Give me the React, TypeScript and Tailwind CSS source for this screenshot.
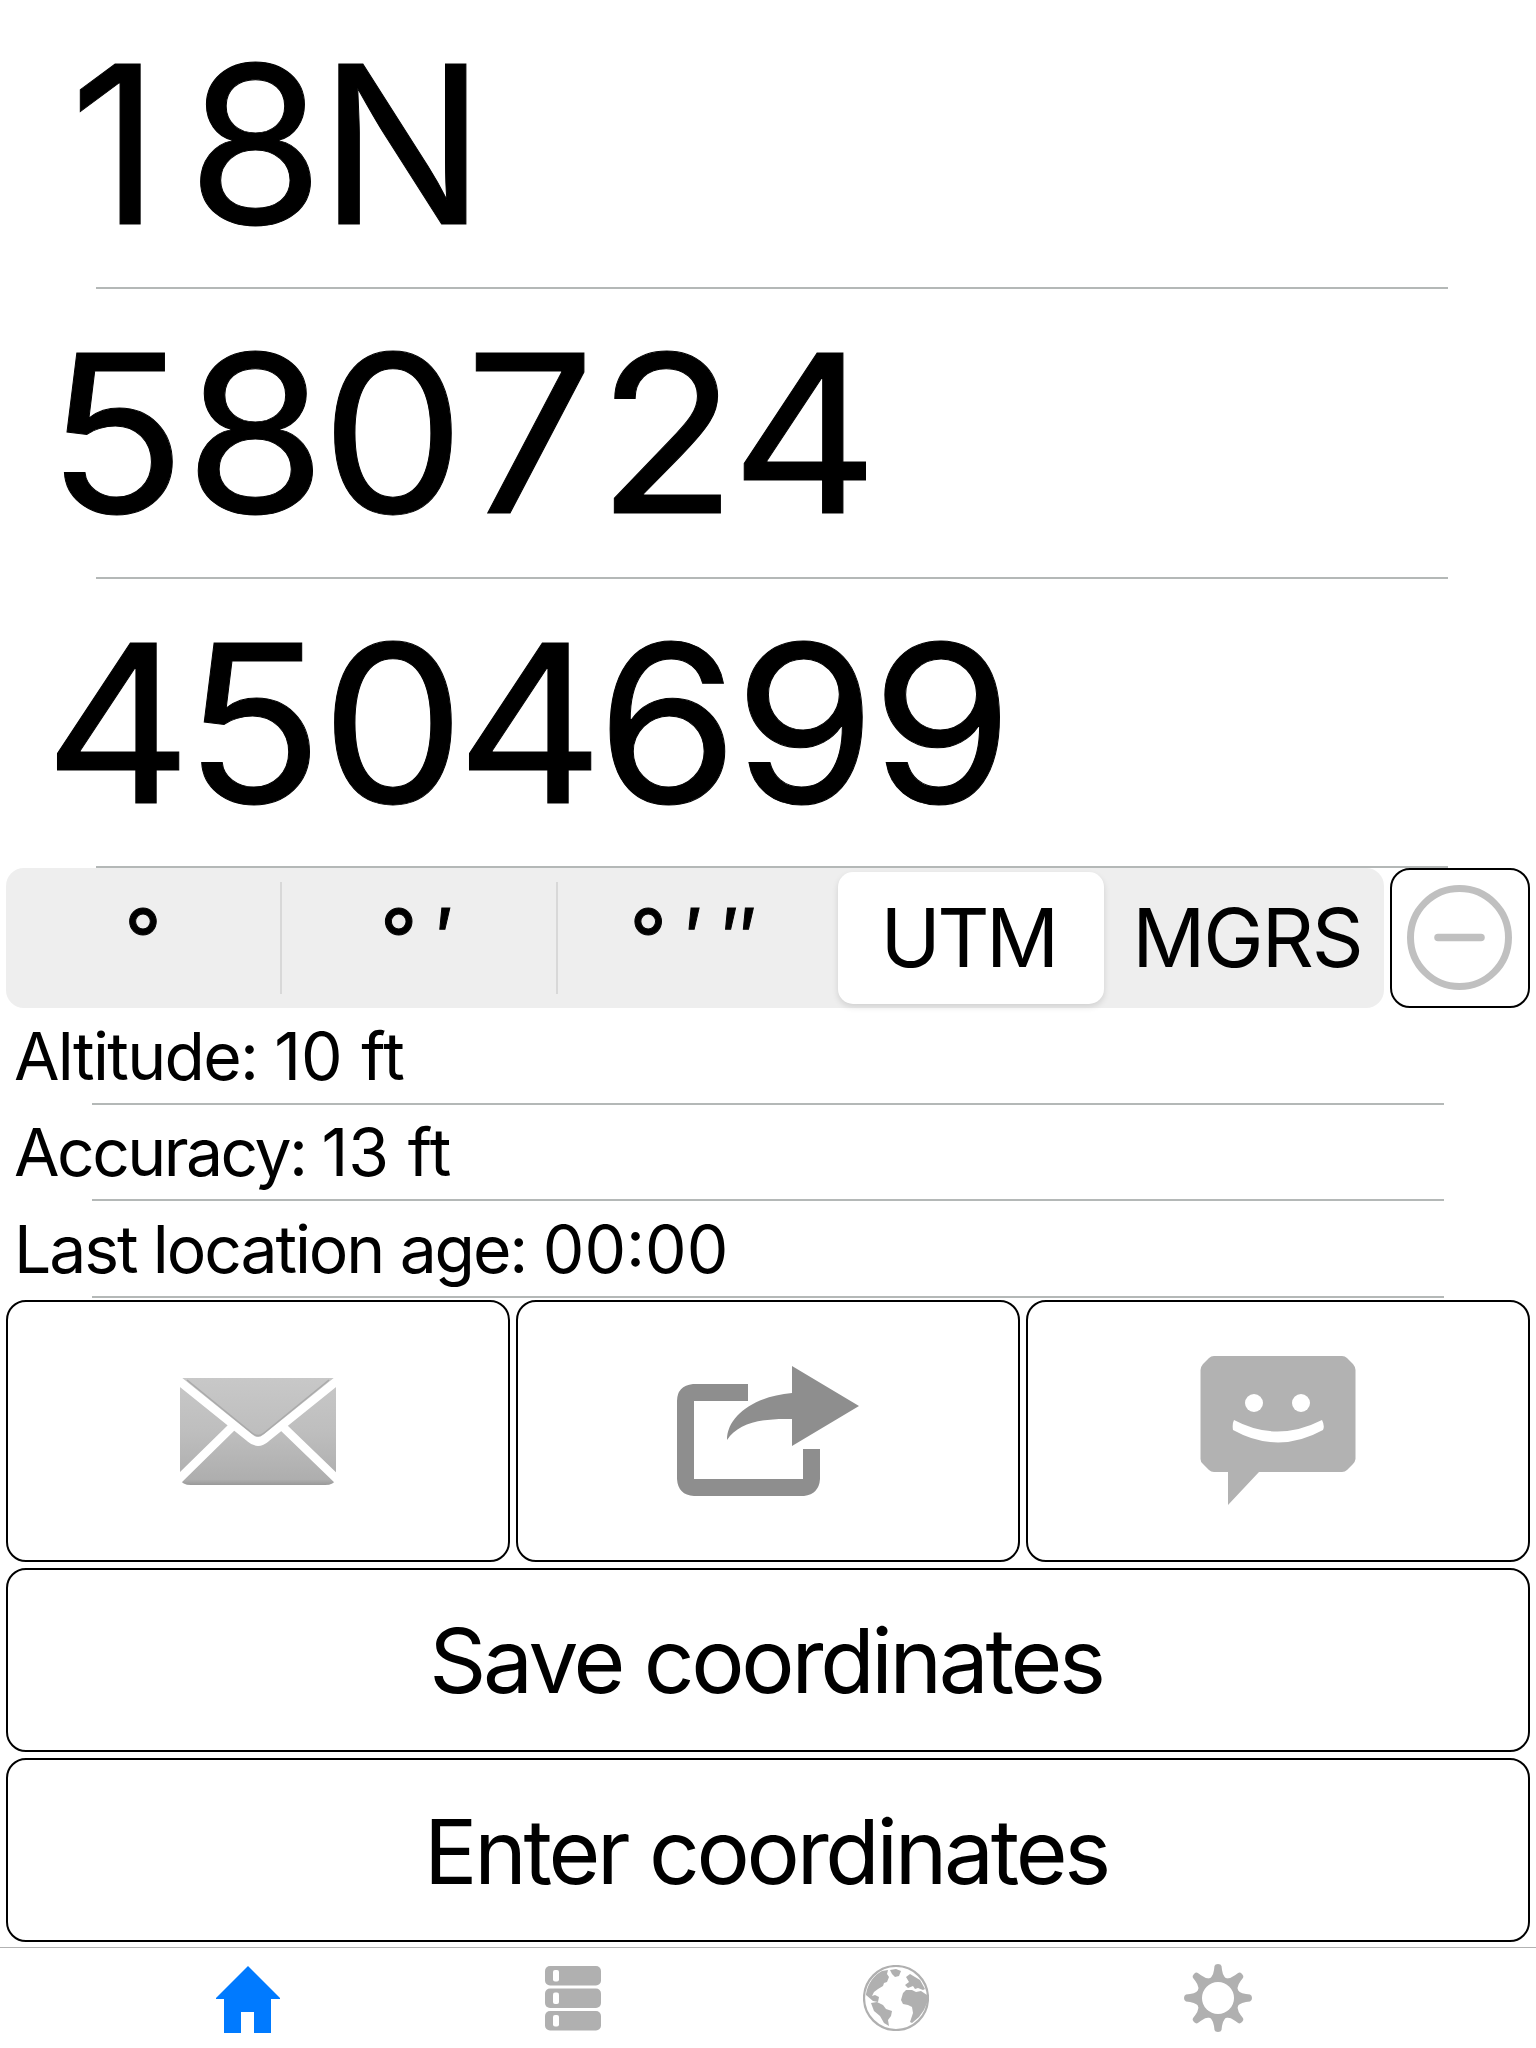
import type { ReactNode } from "react";

const coordinates = [
  { zone: "1", value: "8N", className: "ml-[70px] tracking-[-4px]" },
  { value: "580724", className: "ml-[44px] tabular-nums tracking-[-10.6px] scale-x-[1.04]" },
  { value: "4504699", className: "ml-[44px] tabular-nums tracking-[-10.6px] scale-x-[1.04]" },
];

const info = [
  { label: "Altitude: ", value: "10 ft", className: "tracking-[-1.7px]" },
  { label: "Accuracy: ", value: "13 ft", className: "tracking-[-2.55px]" },
  { label: "Last location age: ", value: "00:00", className: "tracking-[-2.1px]" },
];

function MailIcon() {
  return (
    <svg className="mt-0.5" width="158" height="110" viewBox="0 0 158 110">
      <defs>
        <linearGradient id="mail" x1="0" y1="0" x2="0" y2="1">
          <stop offset="0" stopColor="#c8c8c8" />
          <stop offset="0.5" stopColor="#bebebe" />
          <stop offset="0.95" stopColor="#aeaeae" />
          <stop offset="1" stopColor="#999" />
        </linearGradient>
      </defs>
      <path d="M1 1H157V102Q155 108 146 108H12Q3 108 1 102Z" fill="url(#mail)" />
      <path d="M-1 3L71 61Q79 68 87 61L159 3" fill="none" stroke="#fff" strokeWidth="8.500" />
      <path d="M53 50L-3 105M104 50L161 105" fill="none" stroke="#fff" strokeWidth="8.500" />
      <path d="M8 3L73 56Q79 61 85 56L150 3" fill="none" stroke="#aaa" strokeWidth="1.500" />
    </svg>
  );
}

function ShareIcon() {
  return (
    <svg className="mt-0.5" width="184" height="132" viewBox="0 0 184 132" fill="#8e8e8e">
      <path d="M72 18H17Q1 20 1 35V113Q2 129 18 130H128Q143 128 144 113V83H127V113H18V35H72Z" />
      <path d="M116 0L183 40L116 80V53C86 52 62 57 51 74C51 49 80 30 116 27Z" />
    </svg>
  );
}

function ChatIcon() {
  return (
    <svg width="156" height="150" viewBox="0 0 156 150">
      <path
        d="M14 0H142Q145 0 147 2L153 8Q155.500 11 155.500 14V103Q155 106 153 108L147 114Q145 116 142 116H59L28 149V116H14Q11 116 9 114L3 108Q.5 106 .5 103V14Q.5 11 3 8L9 2Q11 0 14 0Z"
        fill="#b2b2b2"
      />
      <circle cx="54" cy="47" r="9" fill="#fff" />
      <circle cx="101" cy="47" r="9" fill="#fff" />
      <path d="M34 64Q77 87 122 64Q125 70 123 74Q78 99 33 74Q32 68 34 64Z" fill="#fff" />
    </svg>
  );
}

function HomeIcon() {
  return (
    <svg className="mt-0.5" width="64" height="67" viewBox="0 0 64 67" fill="#007aff">
      <path d="M32 0L64 32V33H55V67H38V46H25V67H8V33H0V32Z" />
    </svg>
  );
}

function ListIcon() {
  return (
    <svg width="56" height="65" viewBox="0 0 56 65">
      {[0, 22.5, 45].map((y) => (
        <g key={y}>
          <rect y={y} width="56" height="19.5" rx="5" fill="#b0b0b0" />
          <rect x="8" y={y + 4} width="6" height="11.5" rx="2" fill="#fff" />
        </g>
      ))}
    </svg>
  );
}

function GlobeIcon() {
  return (
    <svg width="66" height="66" viewBox="0 0 66 66" fill="#b0b0b0">
      <circle cx="33" cy="33" r="32" fill="none" stroke="#b0b0b0" strokeWidth="2.2" />
      <path d="M3 29C5 18 11 10 19 6L25 5L24 9L26 12L24 17L21 18L20 21L15 24L11 27L9 31L12 30L16 32L15 37L10 36L3 30Z" />
      <path d="M27 5L33 4L38 6L36 11L32 12L29 9Z" />
      <path d="M8 38L14 37L20 40L23 44L29 46L28 51L25 55L26 61L21 58L17 51L11 46Z" />
      <path d="M43 12L47 9L57 15L62 24L60 25L55 23L52 24L50 21L45 23L42 20L46 17Z" />
      <path d="M40 28L43 25L49 25L53 27L58 26L64 30L64 38L61 45L56 52L49 58L47 57L50 48L49 42L45 40L40 39L38 35Z" />
    </svg>
  );
}

function GearIcon() {
  return (
    <svg width="68" height="68" viewBox="0 0 68 68">
      <g fill="#b0b0b0">
        <circle cx="34" cy="34" r="21.500" />
        {[0, 45, 90, 135, 180, 225, 270, 315].map((a) => (
          <path key={a} transform={`rotate(${a} 34 34)`} d="M22 17Q29 14 30 6L30.500 2Q31 0 34 0T37.500 2L38 6Q39 14 46 17Z" />
        ))}
      </g>
      <circle cx="34" cy="34" r="16" fill="#fff" />
    </svg>
  );
}

function Button({ children, className = "" }: { children: ReactNode; className?: string }) {
  return (
    <button className={`flex items-center justify-center rounded-[20px] border-2 border-black bg-white ${className}`}>
      {children}
    </button>
  );
}

export default function App() {
  return (
    <div className="flex h-[2048px] w-[1536px] flex-col overflow-hidden bg-white font-['Inter','Liberation_Sans',sans-serif] text-black">
      {coordinates.map((row) => (
        <div key={row.value} className="flex h-[289.33px] shrink-0 flex-col">
          <div
            className={`h-[287.33px] origin-left text-[220px] leading-[289px] whitespace-nowrap [-webkit-text-stroke:1px_black] ${row.className}`}
          >
            {row.zone && <span className="tracking-[28px]">{row.zone}</span>}
            {row.value}
          </div>
          <div className="mr-[88px] ml-24 h-0.5 bg-[#b4b8b7]" />
        </div>
      ))}

      <div className="flex h-[140px] shrink-0 gap-1.5 px-1.5">
        <div className="flex w-[1378px] items-center rounded-[18px] bg-[#eee] text-[81px] leading-none whitespace-nowrap">
          <div className="w-[274px] pt-0.5 text-center [-webkit-text-stroke:1px_black]">°</div>
          <div className="h-28 w-0.5 bg-[#d8d8d8]" />
          <div className="w-[274px] pt-0.5 pr-1.5 text-center tracking-[-2px] [-webkit-text-stroke:1px_black]">° ′</div>
          <div className="h-28 w-0.5 bg-[#d8d8d8]" />
          <div className="w-[280px] pt-0.5 pr-[11px] text-center tracking-[-2.2px] [-webkit-text-stroke:1px_black]">° ′ ″</div>
          <div className="flex h-[132px] w-[266px] items-center justify-center rounded-[15px] bg-white pt-0.5 pr-1.5 tracking-[-3.5px] shadow-[0_3px_6px_rgba(0,0,0,0.12)]">
            UTM
          </div>
          <div className="flex-1 pt-0.5 pl-1.5 text-center tracking-[-2px]">MGRS</div>
        </div>
        <Button className="w-[140px]">
          <svg width="106" height="106" viewBox="0 0 106 106" fill="none" stroke="#c0c0c0">
            <circle cx="52.500" cy="52.500" r="49" strokeWidth="7" />
            <path d="M31 52.500H74" strokeWidth="7.500" strokeLinecap="round" />
          </svg>
        </Button>
      </div>

      <div className="h-[290px] shrink-0">
        {info.map((row) => (
          <div key={row.label} className="flex h-[96.33px] flex-col">
            <div className="h-[95px] pl-3.5 text-[66px] leading-[97px] whitespace-nowrap [font-feature-settings:'calt']">
              <span className={row.className}>{row.label}</span>
              {row.value}
            </div>
            <div className="mr-[92px] ml-[92px] h-0.5 shrink-0 bg-[#b4b8b7]" />
          </div>
        ))}
      </div>

      <div className="mt-0.5 flex shrink-0 flex-col gap-1.5 px-1.5">
        <div className="grid h-[262px] grid-cols-3 gap-1.5">
          <Button>
            <MailIcon />
          </Button>
          <Button>
            <ShareIcon />
          </Button>
          <Button>
            <ChatIcon />
          </Button>
        </div>
        <Button className="h-[184px] pt-0.5 pr-1 text-[89px] leading-none tracking-[-3.3px]">Save coordinates</Button>
        <Button className="h-[184px] pt-[3px] pr-1 text-[89px] leading-none tracking-[-3.3px]">Enter coordinates</Button>
      </div>

      <div className="mt-[5px] flex h-[101px] shrink-0 items-center border-t border-[#b2b2b2] pt-px pl-[216px]">
        <HomeIcon />
        <div className="ml-[265px]">
          <ListIcon />
        </div>
        <div className="ml-[262px]">
          <GlobeIcon />
        </div>
        <div className="ml-[255px]">
          <GearIcon />
        </div>
      </div>
    </div>
  );
}
